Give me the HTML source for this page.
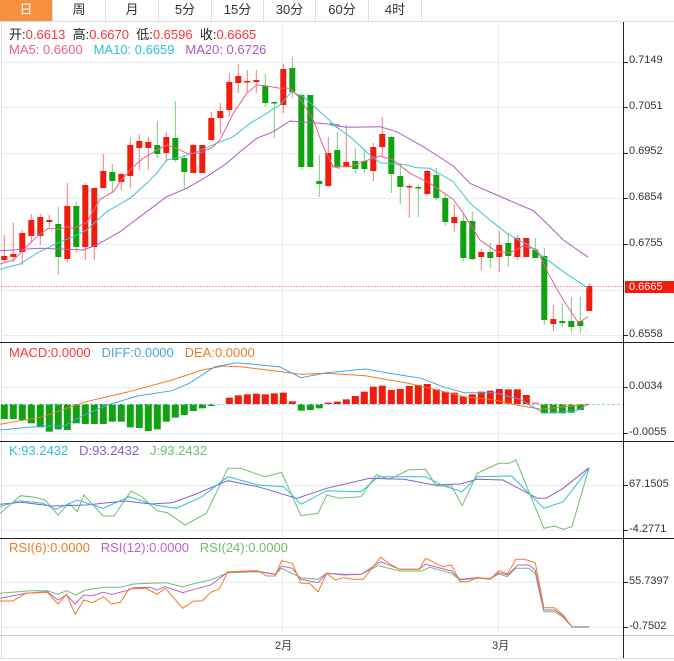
<!DOCTYPE html>
<html><head><meta charset="utf-8"><style>
html,body{margin:0;padding:0;background:#fff;}
body{width:674px;height:661px;overflow:hidden;position:relative;font-family:"Liberation Sans","Noto Sans CJK SC",sans-serif;}
.tabs{position:absolute;left:0;top:0;height:21px;}
.tab{position:absolute;top:0;height:21px;line-height:20px;text-align:center;font-size:13px;color:#333;border-right:1px solid #ddd;box-sizing:border-box;}
.tab.on{background:#f5913e;color:#fff;}
.t{position:absolute;font-size:13px;line-height:14px;white-space:nowrap;}
.ax{position:absolute;font-size:11px;color:#333;left:629px;}
svg{position:absolute;left:0;top:0;}
</style></head><body>
<div class="tabs">
<div class="tab on" style="left:0;width:53px">日</div>
<div class="tab" style="left:53px;width:53px">周</div>
<div class="tab" style="left:106px;width:53px">月</div>
<div class="tab" style="left:159px;width:53px">5分</div>
<div class="tab" style="left:212px;width:52px">15分</div>
<div class="tab" style="left:264px;width:52px">30分</div>
<div class="tab" style="left:316px;width:53px">60分</div>
<div class="tab" style="left:369px;width:53px">4时</div>
</div>
<svg id="s" width="674" height="661" xmlns="http://www.w3.org/2000/svg"></svg>
<div class="t" style="left:9px;top:28px;color:#222">开:<span style="color:#f33">0.6613</span>&nbsp;&nbsp;高:<span style="color:#f33">0.6670</span>&nbsp;&nbsp;低:<span style="color:#f33">0.6596</span>&nbsp;&nbsp;收:<span style="color:#f33">0.6665</span></div>
<div class="t" style="left:9px;top:43px"><span style="color:#ec5f8c">MA5: 0.6600</span>&nbsp;&nbsp;&nbsp;<span style="color:#2bbfd6">MA10: 0.6659</span>&nbsp;&nbsp;&nbsp;<span style="color:#a958c6">MA20: 0.6726</span></div>
<div class="t" style="left:9px;top:346px"><span style="color:#f33">MACD:0.0000</span>&nbsp;&nbsp;&nbsp;<span style="color:#4aa3e8">DIFF:0.0000</span>&nbsp;&nbsp;&nbsp;<span style="color:#f47a20">DEA:0.0000</span></div>
<div class="t" style="left:9px;top:444px"><span style="color:#2bbfd6">K:93.2432</span>&nbsp;&nbsp;&nbsp;<span style="color:#8a5ccc">D:93.2432</span>&nbsp;&nbsp;&nbsp;<span style="color:#6cbf6c">J:93.2432</span></div>
<div class="t" style="left:9px;top:541px"><span style="color:#f47a20">RSI(6):0.0000</span>&nbsp;&nbsp;&nbsp;<span style="color:#c25fd1">RSI(12):0.0000</span>&nbsp;&nbsp;&nbsp;<span style="color:#6cbf6c">RSI(24):0.0000</span></div>
<div class="ax" style="top:54px">0.7149</div>
<div class="ax" style="top:100px">0.7051</div>
<div class="ax" style="top:145px">0.6952</div>
<div class="ax" style="top:191px">0.6854</div>
<div class="ax" style="top:237px">0.6755</div>
<div class="ax" style="top:328px">0.6558</div>
<div style="position:absolute;left:625px;top:281px;width:49px;height:12px;background:#f21c0c;color:#fff;font-size:11px;line-height:12px;padding-left:4px;box-sizing:border-box">0.6665</div>
<div class="ax" style="top:380px">0.0034</div>
<div class="ax" style="top:426px">-0.0055</div>
<div class="ax" style="top:478px">67.1505</div>
<div class="ax" style="top:523px">-4.2771</div>
<div class="ax" style="top:575px">55.7397</div>
<div class="ax" style="top:620px">-0.7502</div>
<div class="ax" style="top:637px;left:275px">2月</div>
<div class="ax" style="top:637px;left:492px">3月</div>
<script>
var s=document.getElementById('s'),h='';
function L(x1,y1,x2,y2,c,w,extra){h+='<line x1="'+x1+'" y1="'+y1+'" x2="'+x2+'" y2="'+y2+'" stroke="'+c+'" stroke-width="'+(w||1)+'" '+(extra||'')+'/>';}
function R(x,y,w,hh,c){h+='<rect x="'+x+'" y="'+y+'" width="'+w+'" height="'+hh+'" fill="'+c+'"/>';}
function P(pts,c,sx,ox,sy,oy){var d=pts.map(function(p,i){return (i?'L':'M')+(p[0]/sx+ox).toFixed(1)+' '+(p[1]/sy+oy).toFixed(1)}).join(' ');h+='<path d="'+d+'" fill="none" stroke="'+c+'" stroke-width="1"/>';}
[62,107,153,198,244,290,335,387,433,485,530,582,627].forEach(function(y){L(2,y+.5,623,y+.5,'#e6edf2');});
[282.5,498.5].forEach(function(x){L(x,22,x,635,'#e8eef2');});
L(0,21.5,674,21.5,'#ddd');L(1.5,22,1.5,658,'#ddd');
L(0,342.5,674,342.5,'#222');L(0,441.5,674,441.5,'#222');L(0,538.5,674,538.5,'#222');
L(0,635.5,674,635.5,'#ccc');L(0,658.5,674,658.5,'#ddd');
L(623.5,22,623.5,658,'#222');
[62,107,153,198,244,335,387,433,485,530,582,627].forEach(function(y){L(623,y+.5,628,y+.5,'#222');});
L(2,286.5,623,286.5,'#f7a0a0',1,'stroke-dasharray="2,1"');
var C=[[1,256,260,235,262],[1,254,257,223,262],[1,233,252,230,265],[1,220,236,214,243],[1,217,236,214,245],[1,220,222,215,227],[0,224,257,207,275],[1,206,259,183,262],[0,206,247,202,253],[1,185,247,183,260],[1,188,247,187,260],[1,171,188,154,188],[0,172,181,164,193],[1,174,182,173,190],[1,145,176,138,188],[1,141,148,134,170],[1,142,148,137,170],[0,145,154,121,158],[1,137,153,132,162],[0,138,160,101,162],[0,158,172,155,189],[1,145,173,144,173],[1,145,173,145,173],[1,118,140,112,140],[1,111,118,103,134],[1,82,110,73,117],[1,76,83,64,93],[1,81,82,70,92],[1,80,82,70,93],[0,86,103,74,107],[0,102,103,101,138],[1,69,105,64,113],[0,68,92,57,98],[0,95,167,93,170],[0,95,167,95,167],[0,181,184,155,197],[1,153,186,137,187],[0,150,167,132,168],[1,162,167,125,167],[0,161,169,148,173],[0,161,169,150,173],[1,147,171,143,181],[1,134,147,117,157],[0,137,174,136,193],[0,176,187,163,204],[1,186,187,184,218],[0,187,188,185,217],[1,171,194,170,195],[0,175,198,168,200],[0,198,222,193,226],[1,217,223,204,232],[0,221,258,213,261],[0,221,259,212,260],[1,252,257,249,270],[0,252,258,243,268],[1,245,257,231,272],[0,243,256,233,267],[1,238,257,235,260],[1,238,257,238,257],[0,250,258,238,258],[0,256,320,248,325],[1,319,324,305,331],[0,321,323,303,327],[0,321,327,297,333],[0,321,326,297,333],[1,286,311,283,311]];
C.forEach(function(c,i){var x=4.3+9*i;var bc=c[0]?'#f21c0c':'#0fa30f',wc=c[0]?'#f77':'#7c7';
L(x,c[3],x,c[4],wc);R(x-3,c[1],6,Math.max(1.5,c[2]-c[1]),bc);});
P([[0,632],[120,625],[200,628],[250,630],[290,615],[360,575],[420,530],[500,470],[560,445],[620,410],[680,370],[720,335],[770,295],[820,275],[870,243],[940,248],[1020,255]],'#b05ac8',3,0,3,40);
P([[0,255],[50,262],[150,260],[200,275],[280,320],[370,378],[420,430],[500,465],[540,482],[610,512],[640,540],[700,600],[775,652]],'#b05ac8',3,330,3,40);
P([[0,688],[60,672],[110,640],[170,610],[220,590],[260,570],[320,515],[390,475],[440,430],[470,400],[500,360],[540,352],[580,340],[650,310],[700,290],[750,250],[800,220],[840,195],[875,155],[910,170],[960,215],[1020,270]],'#3cc4d8',3,0,3,40);
P([[0,248],[60,290],[120,345],[150,368],[230,375],[260,383],[300,385],[370,425],[420,490],[480,540],[530,580],[600,618],[640,650],[700,695],[775,745]],'#3cc4d8',3,330,3,40);
P([[0,672],[40,660],[75,625],[110,590],[145,565],[180,568],[200,560],[220,565],[260,548],[300,478],[340,455],[360,425],[400,380],[430,355],[470,330],[500,315],[530,325],[560,340],[600,340],[640,320],[660,300],[700,220],[740,160],[770,135],[800,138],[840,145],[870,145],[900,175],[940,240],[970,320],[1000,380],[1020,385]],'#ec5f8c',3,0,3,40);
P([[0,380],[60,380],[100,365],[150,348],[190,360],[240,400],[300,430],[370,478],[400,520],[450,600],[500,635],[540,638],[580,618],[620,628],[660,710],[700,780],[745,848],[775,830]],'#ec5f8c',3,330,3,40);
var Hh=[237,237,240,250,262,275,268,270,250,252,252,252,245,245,262,264,273,268,245,233,225,213,205,198,192,173,166,163,161,163,160,158,184,212,210,205,188,185,178,168,155,140,137,150,147,138,135,132,148,155,158,170,163,155,152,147,148,148,165,188,220,220,220,218,210,192];
Hh.forEach(function(v,i){var x=4.3+9*i,y=340+v/3,z=404;if(Math.abs(y-z)<.5)return;
var col=y<z?(i==59?'#f08080':'#f21c0c'):'#0fa30f';R(x-3.5,Math.min(y,z),7,Math.abs(y-z),col);});
L(2,404.5,623,404.5,'#8fd3f5',1,'stroke-dasharray="3,2"');
var X=2.326;
P([[0,253],[100,230],[200,185],[300,155],[400,120],[470,90],[520,78],[560,80],[700,103],[760,100],[850,107],[950,130],[1000,145],[1080,170],[1150,180],[1200,195],[1260,208],[1370,192]],'#f47a20',X,0,3,340);
P([[0,270],[100,258],[150,258],[180,235],[250,195],[320,168],[400,152],[440,130],[500,80],[550,68],[650,80],[700,113],[760,98],[850,87],[920,103],[980,115],[1030,140],[1080,158],[1150,158],[1210,178],[1265,220],[1340,212],[1370,192]],'#4aa3e8',X,0,3,340);
P([[0,520],[48,467],[80,472],[105,480],[135,525],[160,490],[180,515],[195,465],[240,528],[265,528],[305,453],[330,470],[365,512],[390,518],[430,555],[480,520],[530,385],[560,385],[615,410],[655,397],[700,527],[740,520],[760,465],[790,475],[840,470],[875,405],[905,418],[950,390],[990,388],[1015,438],[1050,438],[1075,497],[1110,400],[1160,370],[1185,370],[1200,360],[1265,565],[1290,558],[1310,568],[1330,560],[1370,385]],'#6cbf6c',X,0,3,340);
P([[0,493],[50,487],[120,498],[200,495],[290,483],[350,492],[400,488],[450,465],[530,422],[600,440],[690,475],[760,445],[860,415],[940,418],[1010,435],[1070,432],[1110,418],[1170,420],[1250,475],[1270,475],[1310,445],[1370,383]],'#8a5ccc',X,0,3,340);
P([[0,500],[45,482],[100,490],[130,508],[180,480],[240,505],[300,470],[360,495],[410,505],[470,470],[530,410],[600,435],[660,440],[700,493],[760,452],[840,455],[880,410],[940,410],[990,410],[1030,437],[1075,455],[1110,410],[1190,408],[1265,505],[1310,485],[1370,385]],'#2bbfd6',X,0,3,340);
P([[0,190],[70,182],[110,182],[135,193],[155,182],[175,195],[200,180],[240,172],[280,172],[310,162],[350,160],[385,158],[425,170],[460,158],[490,150],[530,128],[600,125],[640,133],[655,115],[700,143],[740,148],[760,130],[800,133],[840,133],[880,107],[930,123],[980,123],[1000,112],[1050,130],[1070,150],[1110,145],[1140,145],[1160,132],[1180,140],[1200,115],[1230,115],[1245,130],[1265,245],[1290,245],[1310,262],[1330,290],[1370,290]],'#6cbf6c',X,0,3,530);
P([[0,205],[60,190],[110,185],[135,210],[155,195],[175,222],[195,195],[215,197],[240,187],[260,193],[300,180],[310,173],[350,172],[365,180],[385,170],[425,188],[460,175],[490,165],[530,126],[600,124],[640,133],[655,108],[680,115],[700,148],[740,158],[760,130],[800,135],[840,133],[885,95],[930,118],[975,118],[990,103],[1050,123],[1070,148],[1110,143],[1140,148],[1160,128],[1180,135],[1205,105],[1230,105],[1245,120],[1265,240],[1290,240],[1310,258],[1330,290],[1370,290]],'#c25fd1',X,0,3,530);
P([[0,213],[30,213],[60,190],[110,187],[135,222],[155,193],[175,253],[195,210],[215,218],[240,200],[260,222],[280,217],[300,177],[340,175],[365,193],[385,175],[425,235],[450,213],[470,213],[490,187],[510,177],[530,125],[600,122],[620,138],[640,138],[655,92],[680,100],[700,160],[720,160],[740,185],[760,130],[780,150],[800,143],[820,148],[845,148],[885,82],[910,105],[930,118],[975,118],[990,85],[1030,110],[1050,105],[1070,155],[1090,155],[1110,142],[1140,148],[1160,122],[1180,132],[1200,88],[1220,88],[1245,98],[1265,233],[1290,233],[1310,255],[1330,290],[1370,290]],'#f47a20',X,0,3,530);
L(571,627,589,627,'#b8b0a0',2);
s.innerHTML=h;
</script>
</body></html>
